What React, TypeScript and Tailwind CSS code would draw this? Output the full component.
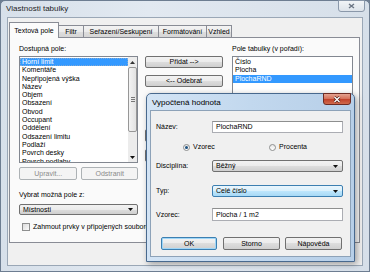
import React from 'react';

const fields = [
  'Horní limit',
  'Komentáře',
  'Nepřipojená výška',
  'Název',
  'Objem',
  'Obsazení',
  'Obvod',
  'Occupant',
  'Oddělení',
  'Odsazení limitu',
  'Podlaží',
  'Povrch desky',
  'Povrch podlahy',
];

const tableFields = ['Číslo', 'Plocha', 'PlochaRND'];

const btnBg =
  'bg-[linear-gradient(#f2f2f2,#ebebeb_50%,#dddddd_50%,#cfcfcf)]';

const Button = ({
  label,
  className = '',
  disabled = false,
  primary = false,
}: {
  label: string;
  className?: string;
  disabled?: boolean;
  primary?: boolean;
}) => {
  if (disabled) {
    return (
      <div
        className={`flex items-center justify-center rounded-[2px] border border-[#adb2b5] bg-[#f4f4f4] text-[#8a8a8a] ${className}`}
      >
        {label}
      </div>
    );
  }
  return (
    <div
      className={`flex items-center justify-center rounded-[2px] border ${
        primary
          ? 'border-[#3c7fb1] shadow-[inset_0_0_0_1px_#9fd6f7]'
          : 'border-[#707070]'
      } ${btnBg} ${className}`}
    >
      {label}
    </div>
  );
};

const Arrow = () => (
  <svg width="5" height="3" viewBox="0 0 5 3" className="shrink-0">
    <path d="M0 0h5L2.5 3z" fill="#111" />
  </svg>
);

const Combo = ({
  value,
  className = '',
  hot = false,
}: {
  value: string;
  className?: string;
  hot?: boolean;
}) => (
  <div
    className={`flex items-center justify-between rounded-[2px] border pl-[3px] pr-[4px] ${
      hot
        ? 'border-[#3c7fb1] bg-[linear-gradient(#eaf6fd,#d9f0fc_50%,#bee6fd_50%,#a7d9f5)]'
        : `border-[#707070] ${btnBg}`
    } ${className}`}
  >
    <span>{value}</span>
    <Arrow />
  </div>
);

const Input = ({ value, className = '' }: { value: string; className?: string }) => (
  <div
    className={`flex items-center border border-[#abadb3] border-t-[#8e8f8f] bg-white pl-[3px] ${className}`}
  >
    {value}
  </div>
);

const Radio = ({ checked }: { checked: boolean }) => (
  <div className="flex h-[7px] w-[7px] items-center justify-center rounded-full border border-[#8e8f8f] bg-[linear-gradient(#e6e6e6,#fff)]">
    {checked && <div className="h-[3px] w-[3px] rounded-full bg-[#1c5180]" />}
  </div>
);

const ScrollBar = () => (
  <div className="flex w-[9px] shrink-0 flex-col bg-[#ececec]">
    <div className="flex h-[10px] items-center justify-center">
      <svg width="5" height="3" viewBox="0 0 5 3">
        <path d="M0 3h5L2.5 0z" fill="#333" />
      </svg>
    </div>
    <div className="flex h-[65px] items-center justify-center rounded-[2px] border border-[#979797] bg-[linear-gradient(90deg,#f3f3f3,#e2e2e2)]">
      <div className="flex flex-col gap-[1px]">
        <div className="h-px w-[4px] bg-[#777]" />
        <div className="h-px w-[4px] bg-[#777]" />
        <div className="h-px w-[4px] bg-[#777]" />
      </div>
    </div>
    <div className="flex-1" />
    <div className="flex h-[10px] items-center justify-center">
      <Arrow />
    </div>
  </div>
);

const Tab = ({ label, active = false, className = '' }: { label: string; active?: boolean; className?: string }) =>
  active ? (
    <div
      className={`relative z-10 -mb-px flex h-[16px] items-center justify-center border border-b-0 border-[#898c95] bg-[#fbfbfb] ${className}`}
    >
      {label}
    </div>
  ) : (
    <div
      className={`-ml-px flex h-[12px] items-center justify-center border border-b-0 border-[#898c95] bg-[linear-gradient(#f3f3f3,#ebebeb_50%,#dedede_50%,#d6d6d6)] ${className}`}
    >
      {label}
    </div>
  );

const App = () => {
  return (
    <div className="relative h-[272px] w-[370px] overflow-hidden bg-[#6d7d91] font-['Liberation_Sans',Arial,sans-serif] text-[7px] leading-[8px] text-black">
      {/* main window */}
      <div className="flex h-full w-full flex-col rounded-t-[5px] border border-[#6d7d91] bg-[linear-gradient(90deg,#d7e0ea,#e2e9f1_40%,#d6dfe9)]">
        <div className="flex h-[16px] shrink-0 items-start justify-between">
          <span className="ml-[5px] mt-[3px] text-[8px] leading-[10px] text-[#1e1e1e]">
            Vlastnosti tabulky
          </span>
          <div className="-mt-px mr-[4px] flex h-[12px] w-[27px] items-center justify-center rounded-b-[3px] border border-[#8a98aa] bg-[linear-gradient(#f1f4f7,#dde3ea)]">
            <svg width="7" height="6" viewBox="0 0 7 6">
              <path d="M1 1l5 4M6 1l-5 4" stroke="#6a7584" strokeWidth="1.4" />
            </svg>
          </div>
        </div>

        <div className="mx-[6px] flex flex-1 flex-col border border-[#9aa7b6] bg-[#f0f0f0]">
          <div className="ml-px mr-[2px] mt-[4px] flex flex-col">
            <div className="flex h-[15px] items-end">
              <Tab label="Textová pole" active className="w-[50px]" />
              <Tab label="Filtr" className="w-[26px]" />
              <Tab label="Seřazení/Seskupení" className="w-[76px]" />
              <Tab label="Formátování" className="w-[49px]" />
              <Tab label="Vzhled" className="w-[26px]" />
            </div>

            <div className="flex h-[206px] gap-[7px] border border-[#898c95] bg-[#fafafa] pl-[9px] pt-[7px]">
              {/* left column */}
              <div className="flex w-[119px] flex-col">
                <div>Dostupná pole:</div>
                <div className="mt-[3px] flex h-[107px] border border-[#828790] bg-white">
                  <div className="flex flex-1 flex-col overflow-hidden pt-px">
                    {fields.map((f, i) => (
                      <div
                        key={f}
                        className={`h-[8.3px] shrink-0 pl-[2px] leading-[8.3px] ${
                          i === 0
                            ? 'bg-[#3399ff] text-white outline-1 -outline-offset-1 outline-dotted outline-[#7fa9d6]'
                            : ''
                        }`}
                      >
                        {f}
                      </div>
                    ))}
                  </div>
                  <ScrollBar />
                </div>
                <div className="mt-[4px] flex gap-[4px]">
                  <Button label="Upravit..." disabled className="h-[13px] w-[59px]" />
                  <Button label="Odstranit" disabled className="h-[13px] w-[57px]" />
                </div>
                <div className="mt-[11px]">Vybrat možná pole z:</div>
                <Combo value="Místnosti" className="mt-[5px] h-[11px]" />
                <div className="mt-[8px] flex items-center gap-[3px] whitespace-nowrap pl-[3px]">
                  <div className="h-[8px] w-[8px] shrink-0 border border-[#8e8f8f] bg-[linear-gradient(135deg,#dcdcdc,#fbfbfb)]" />
                  <span>Zahmout prvky v připojených souborech</span>
                </div>
              </div>

              {/* middle column */}
              <div className="flex w-[78px] flex-col whitespace-nowrap">
                <Button label="Přidat -->" className="mt-[11px] h-[12px]" />
                <Button label="<-- Odebrat" className="mt-[7px] h-[12px]" />
                <Button label="Přidat parametr..." className="mt-[42px] h-[13px]" />
                <Button label="Vypočtená hodnota..." className="mt-[7px] h-[13px]" />
              </div>

              {/* right column */}
              <div className="ml-[2px] flex w-[121px] flex-col">
                <div>Pole tabulky (v pořadí):</div>
                <div className="mt-[3px] flex h-[160px] flex-col border border-[#828790] bg-white pt-px">
                  {tableFields.map((f, i) => (
                    <div
                      key={f}
                      className={`h-[8.3px] leading-[8.3px] ${
                        i === 2 ? 'bg-[#3399ff] pl-[2px] text-white' : 'pl-[2px]'
                      }`}
                    >
                      {f}
                    </div>
                  ))}
                </div>
              </div>
            </div>
          </div>
        </div>
        <div className="h-[5px] shrink-0" />
      </div>

      {/* dialog */}
      <div className="absolute left-[146px] top-[93px] flex h-[169px] w-[209px] flex-col rounded-t-[5px] border border-[#48698e] bg-[linear-gradient(90deg,#d3e4f5,#c2d8ee_50%,#b7cfe8)] shadow-[2px_2px_6px_rgba(0,0,0,0.35)]">
        <div className="flex h-[16px] shrink-0 items-start justify-between">
          <span className="ml-[5px] mt-[4px] text-[8px] leading-[10px]">
            Vypočtená hodnota
          </span>
          <div className="-mt-px mr-[3px] flex h-[12px] w-[28px] items-center justify-center rounded-b-[3px] border border-[#6e2b22] bg-[linear-gradient(#e4a391,#d6735c_45%,#c2442c_55%,#cf6a4d)]">
            <svg width="8" height="7" viewBox="0 0 8 7">
              <path d="M1.5 1l5 5M6.5 1l-5 5" stroke="#4a1b14" strokeWidth="2.6" />
              <path d="M1.5 1l5 5M6.5 1l-5 5" stroke="#fff" strokeWidth="1.4" />
            </svg>
          </div>
        </div>
        <div className="mx-[3px] mb-[4px] flex flex-1 flex-col border border-[#8da2b8] bg-[#f0f0f0] pl-[5px]">
          <div className="mt-[10px] flex items-center">
            <div className="w-[56px]">Název:</div>
            <Input value="PlochaRND" className="h-[12px] w-[131px]" />
          </div>
          <div className="mt-[9px] flex h-[10px] items-center pl-[27px]">
            <div className="flex w-[86px] items-center gap-[3px]">
              <Radio checked />
              <span>Vzorec</span>
            </div>
            <div className="flex items-center gap-[3px]">
              <Radio checked={false} />
              <span>Procenta</span>
            </div>
          </div>
          <div className="mt-[8px] flex items-center">
            <div className="w-[56px]">Disciplína:</div>
            <Combo value="Běžný" className="h-[12px] w-[131px]" />
          </div>
          <div className="mt-[13px] flex items-center">
            <div className="w-[56px]">Typ:</div>
            <Combo value="Celé číslo" hot className="h-[12px] w-[131px]" />
          </div>
          <div className="mt-[11px] flex items-center">
            <div className="w-[56px]">Vzorec:</div>
            <Input value="Plocha / 1 m2" className="h-[13px] w-[131px]" />
          </div>
          <div className="mt-[16px] flex pl-[5px]">
            <Button label="OK" primary className="h-[13px] w-[56px]" />
            <Button label="Storno" className="ml-[6px] h-[13px] w-[57px]" />
            <Button label="Nápověda" className="ml-[5px] h-[13px] w-[57px]" />
          </div>
        </div>
      </div>
    </div>
  );
};

export default App;
